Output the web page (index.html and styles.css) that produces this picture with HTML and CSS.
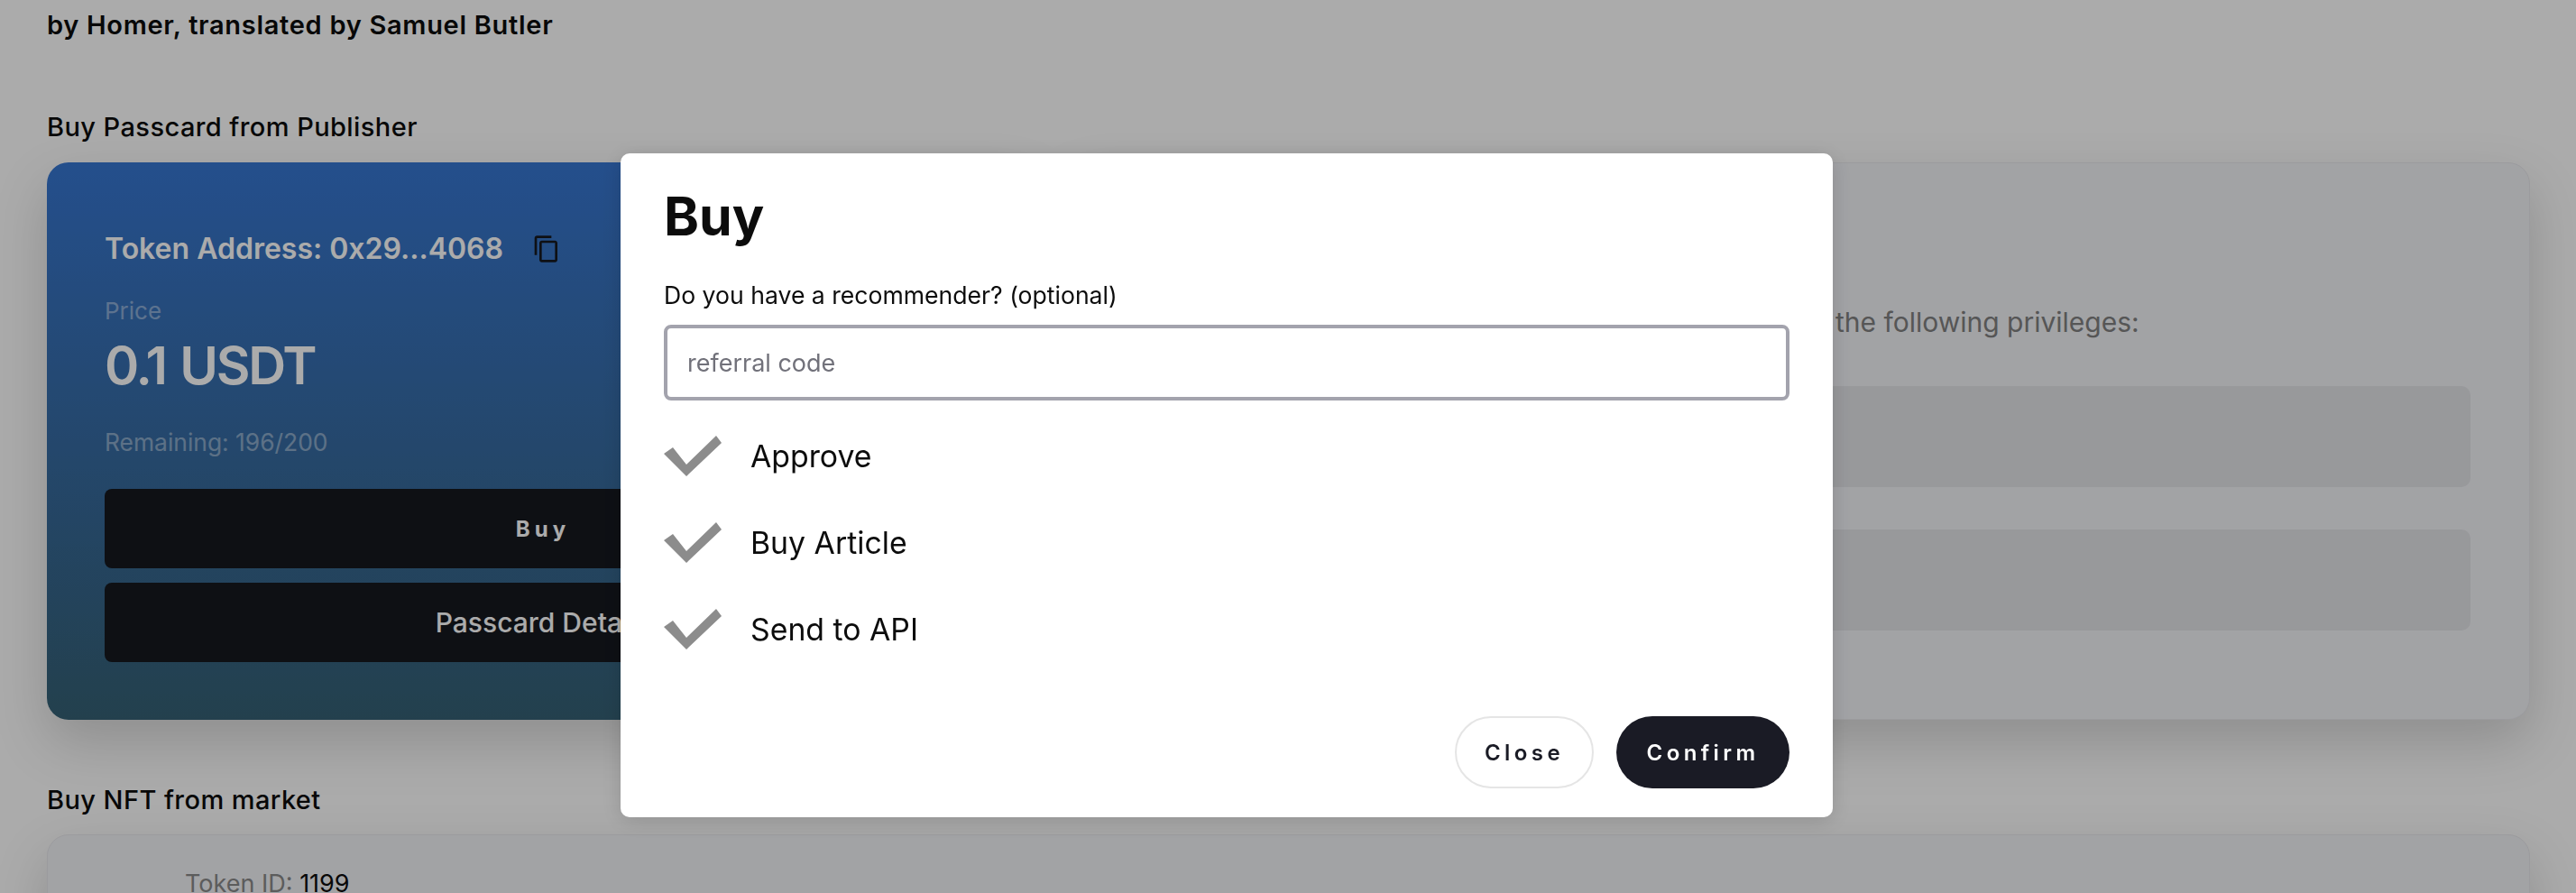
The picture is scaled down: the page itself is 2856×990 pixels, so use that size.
FILE: index.html
```html
<!DOCTYPE html>
<html lang="en">
<head>
<meta charset="utf-8">
<title>Buy</title>
<link rel="stylesheet" href="styles.css">
</head>
<body>
<main class="page">
  <p class="author">by Homer, translated by Samuel Butler</p>
  <h2 class="section-title first">Buy Passcard from Publisher</h2>
  <section class="passcard-row">
    <div class="token-card">
      <div class="address-row">
        <span class="address">Token Address: 0x29...4068</span>
        <svg class="copy-icon" viewBox="0 0 24 24" aria-hidden="true"><path d="M16 1H4c-1.1 0-2 .9-2 2v14h2V3h12V1zm3 4H8c-1.1 0-2 .9-2 2v14c0 1.1.9 2 2 2h11c1.1 0 2-.9 2-2V7c0-1.1-.9-2-2-2zm0 16H8V7h11v14z"/></svg>
      </div>
      <div class="price-label">Price</div>
      <div class="price">0.1 USDT</div>
      <div class="remaining">Remaining: 196/200</div>
      <button class="card-btn spaced">Buy</button>
      <button class="card-btn">Passcard Details</button>
    </div>
    <div class="privilege-card">
      <p class="privilege-text">the following privileges:</p>
      <div class="privilege-item"></div>
      <div class="privilege-item"></div>
    </div>
  </section>
  <h2 class="section-title second">Buy NFT from market</h2>
  <section class="market-card">
    <div class="token-id"><span class="muted">Token ID:</span> 1199</div>
  </section>
</main>
<div class="overlay">
  <div class="modal">
    <h1 class="modal-title">Buy</h1>
    <label class="field-label" for="ref">Do you have a recommender? (optional)</label>
    <input class="field" id="ref" type="text" placeholder="referral code">
    <ul class="steps">
      <li class="step"><svg class="check" viewBox="0 0 64 45" aria-hidden="true"><polygon points="0,20 10,13 25,32 58,0 64,8 25,45"/></svg>Approve</li>
      <li class="step"><svg class="check" viewBox="0 0 64 45" aria-hidden="true"><polygon points="0,20 10,13 25,32 58,0 64,8 25,45"/></svg>Buy Article</li>
      <li class="step"><svg class="check" viewBox="0 0 64 45" aria-hidden="true"><polygon points="0,20 10,13 25,32 58,0 64,8 25,45"/></svg>Send to API</li>
    </ul>
    <div class="actions">
      <button class="pill outline">Close</button>
      <button class="pill solid">Confirm</button>
    </div>
  </div>
</div>
</body>
</html>
```
FILE: styles.css
```css
* { box-sizing: border-box; }
html, body { margin: 0; height: 990px; overflow: hidden; background: #fff; }
body { font-family: "Inter", "Liberation Sans", sans-serif; color: #0c0c0c; }
.page { padding: 10px 51px 0 52px; }
.author { margin: 0; font-size: 29px; line-height: 36px; font-weight: 600; letter-spacing: .7px; }
.section-title { margin: 0; font-size: 29px; line-height: 36px; font-weight: 500; letter-spacing: .42px; }
.section-title.first { margin-top: 77px; margin-bottom: 21px; }
.section-title.second { margin-top: 71px; margin-bottom: 20px; }
.passcard-row { display: flex; gap: 32px; height: 618px; }
.token-card { width: 1100px; flex: none; border-radius: 24px; padding: 76px 64px 0; background: linear-gradient(180deg, #3776d1, #356074); box-shadow: 0 25px 60px rgba(0,0,0,.17); color: #fff; }
.address-row { display: flex; align-items: center; gap: 32px; height: 40px; }
.address { font-size: 32px; font-weight: 600; line-height: 40px; }
.copy-icon { width: 32px; height: 32px; fill: #16181f; }
.price-label { margin-top: 31px; font-size: 26px; line-height: 36px; opacity: .42; }
.price { margin-top: 6px; font-size: 58px; line-height: 72px; font-weight: 600; letter-spacing: -2.2px; word-spacing: 3px; }
.remaining { margin-top: 31px; font-size: 26.4px; line-height: 36px; opacity: .42; }
.card-btn { display: block; width: 100%; height: 88px; border: 0; border-radius: 8px; background: #15181f; color: #fff; font: 500 30px "Inter", "Liberation Sans", sans-serif; margin-top: 16px; }
.remaining + .card-btn { margin-top: 34px; }
.card-btn.spaced { font-size: 24px; font-weight: 700; letter-spacing: 5px; }
.privilege-card { flex: 1; border-radius: 24px; padding: 156px 65px 0; background: #f2f3f7; border: 1px solid #e8e8ec; box-shadow: 0 25px 60px rgba(0,0,0,.17); }
.privilege-text { margin: 0 0 51px; font-size: 30px; line-height: 40px; color: #808080; padding-left: 785px; white-space: nowrap; }
.privilege-item { height: 112px; border-radius: 10px; background: #e3e4e8; margin-bottom: 47px; }
.market-card { height: 400px; border-radius: 24px; background: #f2f3f7; border: 1px solid #e8e8ec; padding: 44px 152px; box-shadow: 0 25px 60px rgba(0,0,0,.17); }
.token-id { font-size: 27px; line-height: 20px; }
.muted { color: #8a8a8a; }
.overlay { position: fixed; inset: 0; background: rgba(0,0,0,.33); }
.modal { position: absolute; left: 688px; top: 170px; width: 1344px; height: 736px; background: #fff; border-radius: 10px; padding: 30px 48px 32px; display: flex; flex-direction: column; box-shadow: 0 4px 24px rgba(0,0,0,.15); }
.modal-title { margin: 0; font-size: 59px; line-height: 80px; font-weight: 700; }
.field-label { margin-top: 29px; font-size: 26.6px; line-height: 36px; font-weight: 400; }
.field { margin-top: 15px; height: 84px; width: 100%; border: 4px solid #a3a3ad; border-radius: 8px; padding: 0 22px; font: 400 27px "Inter", "Liberation Sans", sans-serif; outline: 0; }
.field::placeholder { color: #71717a; opacity: 1; }
.steps { list-style: none; margin: 37px 0 0; padding: 0; flex: 1; }
.step { display: flex; align-items: center; gap: 32px; height: 48px; margin-bottom: 48px; font-size: 33.8px; }
.check { width: 64px; height: 45px; fill: #8c8c8c; }
.actions { display: flex; justify-content: flex-end; gap: 25px; }
.pill { height: 80px; border-radius: 40px; font: 600 24px "Inter", "Liberation Sans", sans-serif; letter-spacing: 4.4px; }
.pill.outline { width: 154px; background: #fff; border: 2px solid #e5e5e5; color: #1a1b25; }
.pill.solid { width: 192px; background: #1a1b25; border: 0; color: #fff; }
```
